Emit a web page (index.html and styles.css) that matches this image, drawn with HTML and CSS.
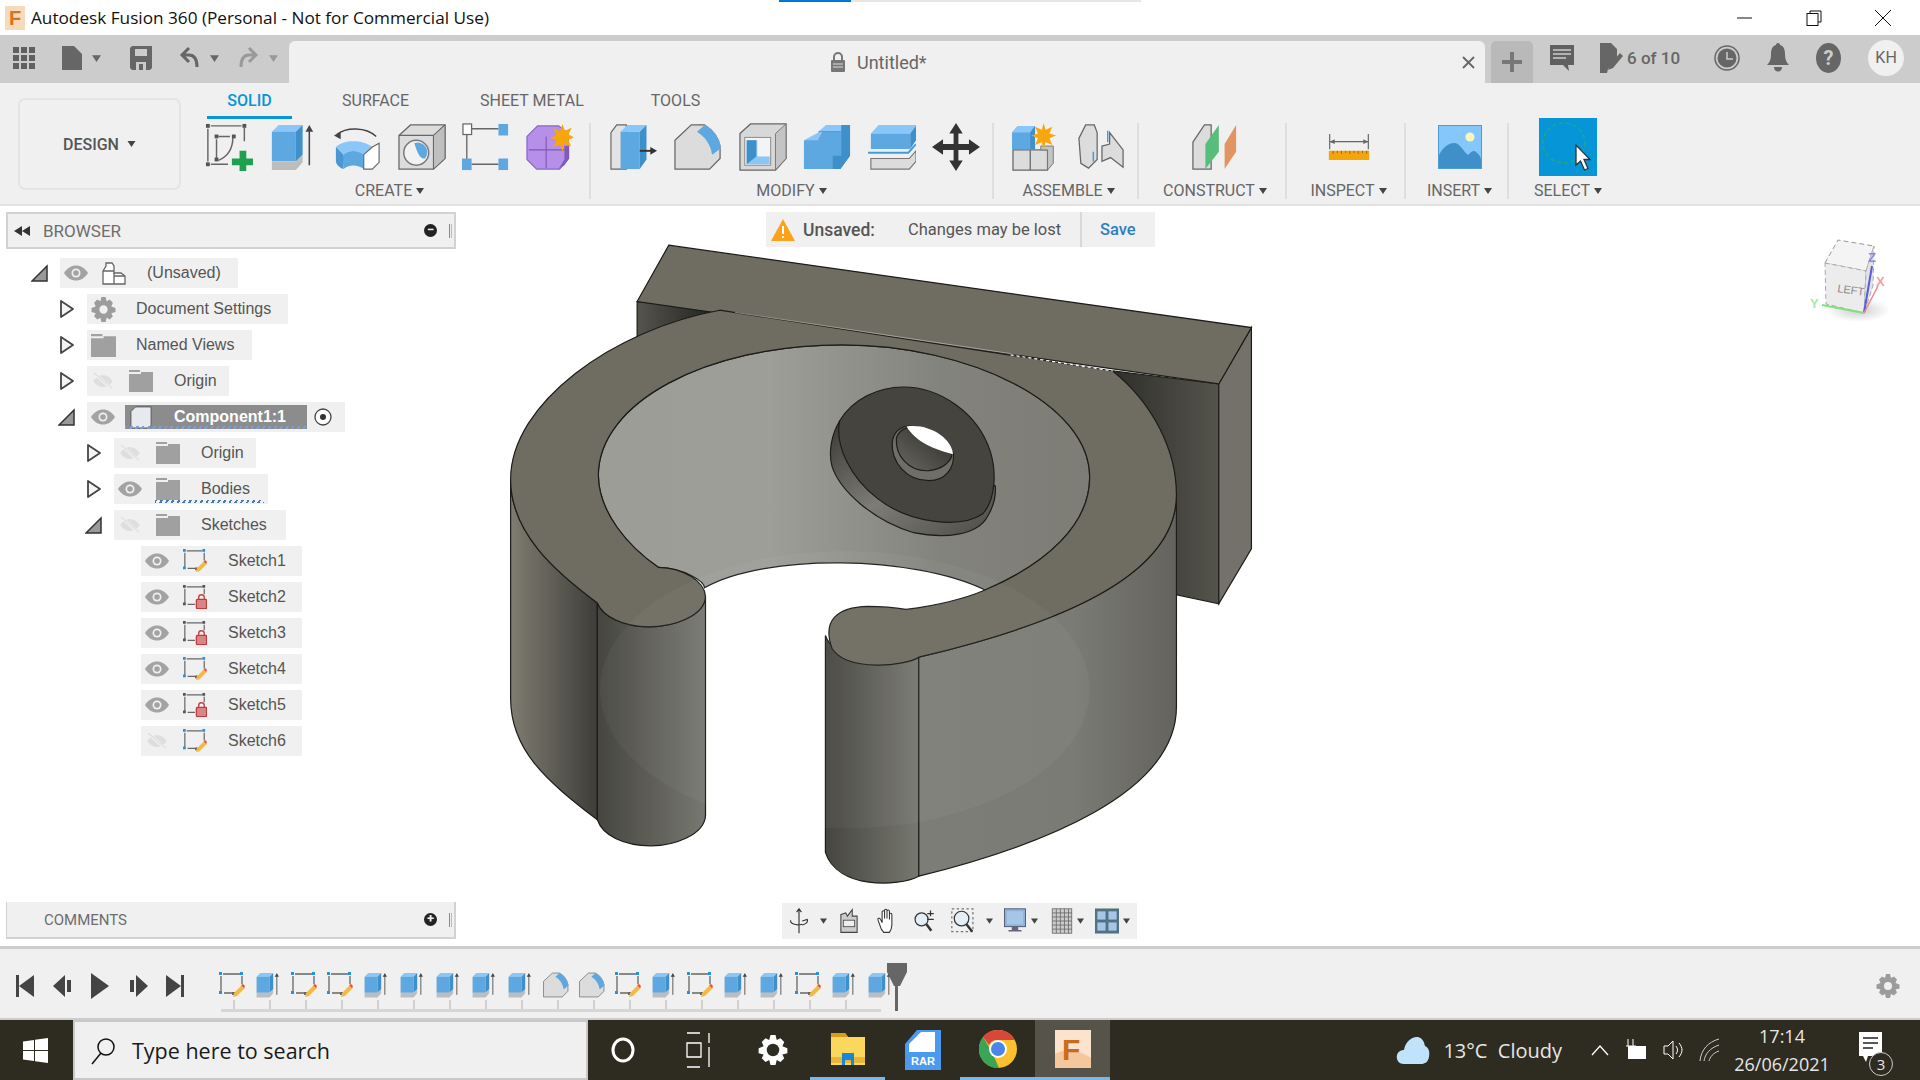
FILE: index.html
```html
<!DOCTYPE html>
<html lang="en">
<head>
    <meta charset="UTF-8">
    <title>Autodesk Fusion 360</title>
    <link rel="stylesheet" href="styles.css">
</head>
<body>
    <svg class="defs" width="0" height="0">
        <defs>
            <linearGradient id="g-floor"><stop offset="0" stop-color="#9c9d97"/><stop offset=".35" stop-color="#9d9e98"/><stop offset=".7" stop-color="#83837d"/><stop offset="1" stop-color="#7d7c75"/></linearGradient>
            <linearGradient id="g-wall-l"><stop offset="0" stop-color="#7f7d71"/><stop offset="1" stop-color="#3e3d39"/></linearGradient>
            <linearGradient id="g-lobe"><stop offset="0" stop-color="#464540"/><stop offset="1" stop-color="#777870"/></linearGradient>
            <linearGradient id="g-wall-r"><stop offset="0" stop-color="#7c7d76"/><stop offset=".6" stop-color="#7a7b74"/><stop offset="1" stop-color="#64635d"/></linearGradient>
            <linearGradient id="g-back-r"><stop offset="0" stop-color="#2f2f2b"/><stop offset="1" stop-color="#55544c"/></linearGradient>
            <linearGradient id="g-back-l"><stop offset="0" stop-color="#55544d"/><stop offset="1" stop-color="#1f1f1c"/></linearGradient>
            <linearGradient id="g-rim" x1="0" y1="0" x2="1" y2="1"><stop offset="0" stop-color="#3a3935"/><stop offset=".5" stop-color="#7d7c75"/><stop offset="1" stop-color="#4c4b45"/></linearGradient>
            <linearGradient id="g-bore" x1="0" y1="1" x2="1" y2="0"><stop offset="0" stop-color="#6a6962"/><stop offset="1" stop-color="#2a2a27"/></linearGradient>
        </defs>
        <symbol id="i-sketch" viewBox="0 0 50 50">
            <g fill="none" stroke="#666" stroke-width="1.500"><path d="M6 3h32M3 6v34M6 43h18M41 5v14"/><path d="M14 14h12M12 17v20M29 15c0 12-6 20-15 24"/></g>
            <g fill="#555"><rect x="1" y="1" width="4" height="4"/><rect x="39" y="1" width="4" height="4"/><rect x="1" y="41" width="4" height="4"/><rect x="10" y="12" width="4" height="4"/><rect x="28" y="12" width="4" height="4"/><rect x="10" y="36" width="4" height="4"/></g>
            <path d="M36 29h7v8h7v7h-7v6h-7v-6h-8v-7h8z" fill="#1ea04e"/>
        </symbol>
        <symbol id="i-extrude" viewBox="0 0 48 50">
            <path d="M2 9 9 2h25l-7 7z" fill="#8ac6f7"/><path d="M2 9h25v31H2z" fill="#5da8e0"/><path d="M27 9l7-7v31l-7 7z" fill="#3f8fcb"/>
            <path d="M2 40h25l7-7v8l-7 8H2z" fill="#bdbdbd"/><path d="M41 44V6" stroke="#444" stroke-width="1.600"/><path d="M37 9l4-7 4 7z" fill="#444"/>
        </symbol>
        <symbol id="i-revolve" viewBox="0 0 50 50">
            <path d="M3 25c8-8 28-8 38 0l-9 8c-6-5-16-5-21 0z" fill="#8ac6f7"/><path d="M3 25l8 8c1 3 0 10 0 15-5-2-8-5-8-9z" fill="#4b97d3"/><path d="M11 33c5-5 15-5 21 0v15c-6-5-16-5-21 0z" fill="#5da8e0"/>
            <path d="M41 25l7-4v20l-7 7-9 0v-15z" fill="#fff" stroke="#666" stroke-width="1.200"/><path d="M4 12c10-8 30-8 41 2" fill="none" stroke="#444" stroke-width="1.500"/><path d="M1 13l7-4 0 8z" fill="#444"/>
        </symbol>
        <symbol id="i-hole" viewBox="0 0 50 50">
            <path d="M1 13 13 2h36v35L37 48H1z" fill="#dcdcdc" stroke="#666" stroke-width="1.300"/><path d="M1 13h36v35M37 13 49 2" fill="none" stroke="#666" stroke-width="1.300"/><path d="M37 13l12-11v35L37 48z" fill="#bfbfbf" stroke="#666" stroke-width="1"/>
            <circle cx="19" cy="31" r="13" fill="#f2f2f2" stroke="#777" stroke-width="1.500"/><path d="M17 21a10 10 0 0 1 11 16c-6 1-9-10-11-16z" fill="#5da8e0"/>
        </symbol>
        <symbol id="i-pattern" viewBox="0 0 50 50">
            <path d="M10 6h28M5 10v28M10 43h28" stroke="#666" stroke-width="1.400"/><rect x="1" y="1" width="9" height="11" fill="#fff" stroke="#666" stroke-width="1.300"/>
            <rect x="38" y="1" width="10" height="12" fill="#5da8e0"/><rect x="0" y="37" width="10" height="12" fill="#5da8e0"/><rect x="38" y="37" width="10" height="12" fill="#5da8e0"/>
        </symbol>
        <symbol id="i-box" viewBox="0 0 50 50">
            <path d="M12 3h22l10 8v26l-9 11H11L1 38V14z" fill="#b58fe8" stroke="#8a64c6" stroke-width="1.200"/><path d="M3 28h37M21 14v33" stroke="#7e58b8" stroke-width="1.200"/><path d="M40 24v14l-6 10 6-4 5-7V24z" fill="#8059bf"/>
            <path d="M38 1l2.500 7 7-3-3 7 5.500 3-6 2.500 3 7-7-2.500L38 30l-2.500-7.500-7 2.500 3-7-6-2.500 6-3-3-7 7 3z" fill="#f7a70d"/>
        </symbol>
        <symbol id="i-press" viewBox="0 0 50 50">
            <path d="M1 10 7 2h10v46H1z" fill="#e3e3e3" stroke="#666" stroke-width="1.200"/><path d="M11 9h20v39H11z" fill="#5da8e0"/><path d="M11 9l7-7h20l-7 7z" fill="#8ac6f7"/><path d="M31 9l7-7v36l-7 10z" fill="#3f8fcb"/>
            <path d="M31 29h12" stroke="#333" stroke-width="2"/><path d="M42 25l7 4-7 4z" fill="#333"/>
        </symbol>
        <symbol id="i-fillet" viewBox="0 0 50 50">
            <path d="M1 18 18 2h14c8 5 14 12 16 22v13L37 48H1z" fill="#dcdcdc" stroke="#666" stroke-width="1.300"/><path d="M39 48V32c0-10-6-18-14-22l7-8c9 5 15 13 17 24l-10 6z" fill="#bdbdbd"/><path d="M24 9l8-7c9 5 15 13 17 24l-9 7c-2-11-8-19-16-24z" fill="#5da8e0"/>
        </symbol>
        <symbol id="i-shell" viewBox="0 0 50 50">
            <path d="M1 11 12 1h37v36L38 49H1z" fill="#d8d8d8" stroke="#666" stroke-width="1.300"/><path d="M38 11 49 1v36L38 49z" fill="#c4c4c4" stroke="#777"/><rect x="6" y="15" width="27" height="29" fill="#f4f4f4" stroke="#888"/>
            <path d="M8 18h11v17h13v8H8z" fill="#8ac6f7"/><path d="M8 18h10v17l-10 8z" fill="#3f8fcb"/>
        </symbol>
        <symbol id="i-combine" viewBox="0 0 50 50">
            <path d="M16 16 24 2h25v32l-10 14H1V18z" fill="#5da8e0"/><path d="M16 9h24V2H24zM1 18h15v-8zM24 2l-8 8v6" fill="#8ac6f7"/><path d="M40 2v32h-9v14h8l10-14V2z" fill="#3f8fcb"/><path d="M16 9h24" stroke="#4a9ad8"/>
        </symbol>
        <symbol id="i-offset" viewBox="0 0 50 50">
            <path d="M3 11 11 2h41l-8 9z" fill="#8ac6f7"/><path d="M3 11h41v16H3z" fill="#5da8e0"/><path d="M44 11l6-8v15l-6 9z" fill="#3f8fcb"/>
            <path d="M3 37h40l7-8v11l-7 8H3z" fill="#dcdcdc" stroke="#777" stroke-width="1.200"/><path d="M0 31h42l8-9" fill="none" stroke="#3f9ce4" stroke-width="2"/>
        </symbol>
        <symbol id="i-move" viewBox="0 0 50 50">
            <path d="M25 0l7 11h-4.500v11H38.500V17L50 25l-11.500 8V28H27.500v11H32L25 50l-7-11h4.500V28H11.500v5L0 25l11.500-8v5H22.500V11H18z" fill="#333"/>
        </symbol>
        <symbol id="i-newcomp" viewBox="0 0 50 50">
            <path d="M0 10l6-7h18v24H0z" fill="#5da8e0"/><path d="M0 10l6-7h18l-5 7z" fill="#8ac6f7"/><path d="M19 10l5-7v24h-5z" fill="#3f8fcb"/><path d="M1 28h18v21H1zM19 28h18v21H19z" fill="#dcdcdc" stroke="#666" stroke-width="1.300"/><path d="M37 49l6-7V24H30v4h7z" fill="#c4c4c4" stroke="#777"/>
            <path d="M33 0l2 7 7-3-3 7 7 2-7 3 3 7-7-3-2 7-2-7-7 3 3-7-7-3 7-2-3-7 7 3z" fill="#f7a70d"/>
        </symbol>
        <symbol id="i-joint" viewBox="0 0 50 50">
            <path d="M2 16 9 2h9l3 8v28l-9 9-8-5z" fill="#dcdcdc" stroke="#666" stroke-width="1.300"/><path d="M26 24l8-2v-12l14 18v18L35 36l-9 4z" fill="#dcdcdc" stroke="#666" stroke-width="1.300"/><path d="M17 30v10M32 8v12" stroke="#3f9ce4" stroke-width="1.500"/>
        </symbol>
        <symbol id="i-plane" viewBox="0 0 50 50">
            <path d="M2 20 14 2h7v46H2z" fill="#dcdcdc" stroke="#666" stroke-width="1.300"/><path d="M15 48V22L29 2v28z" fill="#57bd7b"/><path d="M35 48V22L47 2v28z" fill="#e29560"/>
        </symbol>
        <symbol id="i-measure" viewBox="0 0 50 34" preserveAspectRatio="none">
            <path d="M2 0v20M48 0v20M2 10h46" stroke="#666" stroke-width="1.400"/><path d="M2 10l6-3v6zM48 10l-6-3v6z" fill="#666"/><rect x="1" y="22" width="48" height="12" fill="#f4a50c"/><path d="M6 22v4M11 22v3M16 22v4M21 22v3M26 22v4M31 22v3M36 22v4M41 22v3M46 22v4" stroke="#8a5a10"/>
        </symbol>
        <symbol id="i-image" viewBox="0 0 44 44">
            <rect x=".5" y=".5" width="43" height="43" fill="#85c7fa" stroke="#4f9bd6"/><circle cx="32" cy="12" r="4.500" fill="#fbf6b8"/><path d="M1 43V30c4-8 10-12 15-12 6 0 9 8 14 12 4-4 6-5 8-3 3 2 5 5 5 8v8z" fill="#3f8fc8"/>
        </symbol>
        <symbol id="i-select" viewBox="0 0 58 58">
            <rect width="58" height="58" fill="#0696d7"/><ellipse cx="25" cy="25" rx="21" ry="20" fill="none" stroke="#2aa77a" stroke-width="1.400" stroke-dasharray="4 3"/><path d="M37 27v20l4.500-4 4 9 3.500-1.500-4-9h6z" fill="#fff" stroke="#333" stroke-width="1.300"/>
        </symbol>
        <symbol id="i-eye" viewBox="0 0 24 16">
            <path d="M0 8c6-10 18-10 24 0-6 10-18 10-24 0z" fill="#a3a3a3"/><circle cx="12" cy="8" r="4.500" fill="#f0f0f0"/><circle cx="12" cy="8" r="2.800" fill="#a3a3a3"/>
        </symbol>
        <symbol id="i-eye-off" viewBox="0 0 24 18">
            <path d="M1 9c6-9 16-9 22 0-6 9-16 9-22 0z" fill="#dedede"/><path d="M3 1l18 16" stroke="#f0f0f0" stroke-width="3.500"/><path d="M2 0l20 17" stroke="#dcdcdc" stroke-width="1.200"/>
        </symbol>
        <symbol id="i-folder" viewBox="0 0 24 22">
            <path d="M0 0h11v2H0zM0 4h24v18H0zM12 2h12v2H12z" fill="#a0a0a0"/>
        </symbol>
        <symbol id="i-gear" viewBox="0 0 24 24">
            <path d="M10 0h4l1 4 3-1.500 3 3L19.500 9l4 1.500v4l-4 1 1.500 3-3 3-3-1.500-1 4h-4l-1-4-3 1.500-3-3L4.500 15.500l-4-1v-4l4-1.500L3 5.500l3-3L9 4z" fill="#9c9c9c"/><circle cx="12" cy="12" r="4" fill="#f0f0f0"/>
        </symbol>
        <symbol id="i-sk-edit" viewBox="0 0 26 26">
            <path d="M4 2h17M2 4v16M5 21h8M23 4v8" stroke="#666" stroke-width="1.300"/><g fill="#2193e6"><rect x="0" y="0" width="3" height="3"/><rect x="21" y="0" width="3" height="3"/><rect x="0" y="19" width="3" height="3"/></g><rect x="13" y="20" width="3" height="3" fill="#666"/>
            <path d="M15 21l8-8 3 3-8 8-4 1z" fill="#f4b942"/><path d="M22 13l2-1 2 2-1 2z" fill="#e84a4a"/>
        </symbol>
        <symbol id="i-sk-lock" viewBox="0 0 26 26">
            <path d="M4 2h17M2 4v16M5 21h8M23 4v6" stroke="#666" stroke-width="1.300"/><g fill="#555"><rect x="0" y="0" width="3" height="3"/><rect x="21" y="0" width="3" height="3"/><rect x="0" y="19" width="3" height="3"/></g>
            <path d="M17 16v-2.500a3 3 0 0 1 6 0V16" fill="none" stroke="#c94040" stroke-width="1.500"/><rect x="14.500" y="15.500" width="11" height="10" rx="1" fill="#d78585" stroke="#c23a3a" stroke-width="1.400"/>
        </symbol>
        <symbol id="i-caret" viewBox="0 0 8 6"><path d="M0 0h8L4 6z"/></symbol>
        <symbol id="i-tri-open" viewBox="0 0 18 18"><path d="M16 2v15H1z" fill="#999" stroke="#333" stroke-width="1.500"/></symbol>
        <symbol id="i-tri-closed" viewBox="0 0 16 20"><path d="M2 2l12 8-12 8z" fill="#f4f4f4" stroke="#444" stroke-width="1.800" stroke-linejoin="round"/></symbol>
    </svg>

    <header class="titlebar">
        <svg class="app-icon" width="20" height="24" viewBox="0 0 20 24"><rect width="20" height="24" fill="#f7d9bb"/><text x="4" y="19" class="app-f">F</text></svg>
        <span class="window-title">Autodesk Fusion 360 (Personal - Not for Commercial Use)</span>
        <div class="progress"><span class="progress-fill"></span></div>
        <div class="window-buttons">
            <svg width="16" height="16" viewBox="0 0 16 16"><path d="M0 8h15" stroke="#111"/></svg>
            <svg width="16" height="16" viewBox="0 0 16 16" fill="none" stroke="#111"><path d="M4 3V1h11v11h-3"/><rect x="1" y="3.500" width="11" height="12" fill="#fff"/></svg>
            <svg width="16" height="16" viewBox="0 0 16 16"><path d="M0 0l16 16M16 0 0 16" stroke="#111"/></svg>
        </div>
    </header>

    <div class="tabbar">
        <div class="quick">
            <svg class="q-grid" width="22" height="22" viewBox="0 0 22 22" fill="#606060"><rect width="6" height="6"/><rect x="8" width="6" height="6"/><rect x="16" width="6" height="6"/><rect y="8" width="6" height="6"/><rect x="8" y="8" width="6" height="6"/><rect x="16" y="8" width="6" height="6"/><rect y="16" width="6" height="6"/><rect x="8" y="16" width="6" height="6"/><rect x="16" y="16" width="6" height="6"/></svg>
            <svg class="q-file" width="20" height="24" viewBox="0 0 20 24"><path d="M0 0h12l8 8v16H0z" fill="#666"/></svg>
            <svg class="q-caret" width="9" height="7"><use href="#i-caret" fill="#666"/></svg>
            <svg class="q-save" width="22" height="24" viewBox="0 0 22 24"><path d="M2 0h20v22l-2 2H2l-2-2V2z" fill="#666"/><rect x="5" y="3" width="12" height="7" fill="#ccc"/><rect x="6" y="16" width="10" height="8" fill="#ccc"/><rect x="9" y="18" width="4" height="6" fill="#666"/></svg>
            <svg class="q-undo" width="20" height="24" viewBox="0 0 20 24" fill="none" stroke="#666" stroke-width="3"><path d="M10 2 3 9l7 7M3 9h7c5 0 8 4 8 12"/></svg>
            <svg class="q-caret2" width="9" height="7"><use href="#i-caret" fill="#666"/></svg>
            <svg class="q-redo" width="20" height="24" viewBox="0 0 20 24" fill="none" stroke="#999" stroke-width="3"><path d="M10 2l7 7-7 7M17 9h-7C5 9 2 13 2 21"/></svg>
            <svg class="q-caret3" width="9" height="7"><use href="#i-caret" fill="#999"/></svg>
        </div>
        <div class="doc-tab">
            <svg class="doc-lock" width="14" height="20" viewBox="0 0 14 20"><path d="M3 9V5a4 4 0 0 1 8 0v4" fill="none" stroke="#777" stroke-width="2"/><rect y="8" width="14" height="12" rx="1" fill="#777"/><path d="M2 12h10M2 15h10" stroke="#ddd"/></svg>
            <span class="doc-name">Untitled*</span>
            <svg class="doc-close" width="13" height="13" viewBox="0 0 13 13"><path d="M1 1l11 11M12 1 1 12" stroke="#666" stroke-width="1.800"/></svg>
        </div>
        <div class="plus-tab"><svg width="20" height="20" viewBox="0 0 20 20"><path d="M8 0h4v8h8v4h-8v8H8v-8H0V8h8z" fill="#777"/></svg></div>
        <div class="account">
            <svg class="a-comment" width="24" height="28" viewBox="0 0 24 28"><path d="M0 1h24v20h-6l1 6-6-6H0z" fill="#606060"/><path d="M3 6h18M3 10h18M3 14h13" stroke="#ccc" stroke-width="1.500"/></svg>
            <svg class="a-doc" width="24" height="30" viewBox="0 0 24 30"><path d="M0 0h11l6 6v9L8 26l-1 4H0z" fill="#666"/><path d="M20 10l3 3-10 12-5 2 2-5z" fill="#666"/></svg>
            <span class="doc-count">6 of 10</span>
            <svg class="a-clock" width="26" height="26" viewBox="0 0 26 26"><circle cx="13" cy="13" r="12" fill="#ccc" stroke="#666" stroke-width="1.500"/><circle cx="13" cy="13" r="9.500" fill="#666"/><path d="M13 7v7h6" fill="none" stroke="#ccc" stroke-width="1.500"/></svg>
            <svg class="a-bell" width="22" height="30" viewBox="0 0 22 30"><path d="M11 0c1.500 0 2 1 2 2 4 1 5 5 5 9 0 5 1 8 4 11H0c3-3 4-6 4-11 0-4 1-8 5-9 0-1 .5-2 2-2zM7 24h8c0 6-8 6-8 0z" fill="#666"/></svg>
            <div class="a-help">?</div>
            <div class="avatar">KH</div>
        </div>
    </div>

    <section class="ribbon">
        <div class="design-box"><span>DESIGN</span><svg width="9" height="6"><use href="#i-caret" fill="#444"/></svg></div>
        <div class="ribbon-main">
            <nav class="ribbon-tabs">
                <span class="rtab rtab-active">SOLID</span>
                <span class="rtab rtab-surface">SURFACE</span>
                <span class="rtab rtab-sheet">SHEET METAL</span>
                <span class="rtab rtab-tools">TOOLS</span>
            </nav>
            <div class="groups">
                <div class="group g-create">
                    <div class="tools">
                        <svg class="tool"><use href="#i-sketch"/></svg>
                        <svg class="tool"><use href="#i-extrude"/></svg>
                        <svg class="tool"><use href="#i-revolve"/></svg>
                        <svg class="tool"><use href="#i-hole"/></svg>
                        <svg class="tool"><use href="#i-pattern"/></svg>
                        <svg class="tool"><use href="#i-box"/></svg>
                    </div>
                    <div class="group-label">CREATE <svg width="8" height="6"><use href="#i-caret" fill="#444"/></svg></div>
                </div>
                <div class="group g-modify">
                    <div class="tools">
                        <svg class="tool"><use href="#i-press"/></svg>
                        <svg class="tool"><use href="#i-fillet"/></svg>
                        <svg class="tool"><use href="#i-shell"/></svg>
                        <svg class="tool"><use href="#i-combine"/></svg>
                        <svg class="tool"><use href="#i-offset"/></svg>
                        <svg class="tool"><use href="#i-move"/></svg>
                    </div>
                    <div class="group-label">MODIFY <svg width="8" height="6"><use href="#i-caret" fill="#444"/></svg></div>
                </div>
                <div class="group g-assemble">
                    <div class="tools">
                        <svg class="tool"><use href="#i-newcomp"/></svg>
                        <svg class="tool"><use href="#i-joint"/></svg>
                    </div>
                    <div class="group-label">ASSEMBLE <svg width="8" height="6"><use href="#i-caret" fill="#444"/></svg></div>
                </div>
                <div class="group g-construct">
                    <div class="tools"><svg class="tool"><use href="#i-plane"/></svg></div>
                    <div class="group-label">CONSTRUCT <svg width="8" height="6"><use href="#i-caret" fill="#444"/></svg></div>
                </div>
                <div class="group g-inspect">
                    <div class="tools"><svg class="tool tool-wide"><use href="#i-measure"/></svg></div>
                    <div class="group-label">INSPECT <svg width="8" height="6"><use href="#i-caret" fill="#444"/></svg></div>
                </div>
                <div class="group g-insert">
                    <div class="tools"><svg class="tool tool-image"><use href="#i-image"/></svg></div>
                    <div class="group-label">INSERT <svg width="8" height="6"><use href="#i-caret" fill="#444"/></svg></div>
                </div>
                <div class="group g-select">
                    <div class="tools"><svg class="tool tool-select"><use href="#i-select"/></svg></div>
                    <div class="group-label">SELECT <svg width="8" height="6"><use href="#i-caret" fill="#444"/></svg></div>
                </div>
            </div>
        </div>
    </section>

    <main class="workspace">
        <!-- the part sits on a free canvas, coordinates are in a 1568 unit box -->
        <svg class="model" viewBox="0 0 1568 1568" preserveAspectRatio="none">
            <g stroke="#1c1c1a" stroke-width="1.200">
                <path vector-effect="non-scaling-stroke" d="M308 165 308 250 470 185z" fill="url(#g-back-l)"/>
                <path vector-effect="non-scaling-stroke" d="M1240 325 1448 355 1448 862 1300 825z" fill="url(#g-back-r)"/>
                <path vector-effect="non-scaling-stroke" d="M1448 355 1512 225 1512 735 1448 862z" fill="#73716a"/>
                <path vector-effect="non-scaling-stroke" d="M370 35 1512 225 1448 355 308 165z" fill="#6f6d61"/>
                <path vector-effect="non-scaling-stroke" d="M232 565C232 400 440 265 710 265 960 265 1195 400 1195 570 1195 680 1110 770 990 830 850 750 560 745 440 825 440 810 400 780 350 778 290 730 232 650 232 565z" fill="url(#g-floor)"/>
                <path vector-effect="non-scaling-stroke" d="M60 575C60 700 150 790 230 860L230 1360C130 1270 60 1200 60 1080z" fill="url(#g-wall-l)"/>
                <path vector-effect="non-scaling-stroke" d="M230 860C240 890 280 915 330 915 380 915 440 890 442 845L442 1350C440 1395 380 1420 335 1420 280 1420 240 1395 230 1360z" fill="url(#g-lobe)"/>
                <path vector-effect="non-scaling-stroke" d="M677 935C690 985 790 1020 860 985L860 1490C820 1515 700 1520 677 1435z" fill="url(#g-lobe)"/>
                <path vector-effect="non-scaling-stroke" d="M860 985C1130 910 1365 800 1365 610L1365 1100C1365 1300 1100 1420 860 1490z" fill="url(#g-wall-r)"/>
                <path vector-effect="non-scaling-stroke" d="M230 860C150 790 60 700 60 575 60 400 260 230 470 185L1240 325C1320 400 1365 510 1365 610 1365 800 1130 910 860 985 835 1005 720 1020 690 965 670 900 700 870 760 868 790 868 820 872 835 875 900 865 950 850 990 830 1110 770 1195 680 1195 570 1195 400 960 265 710 265 440 265 232 400 232 565 232 650 290 730 350 778 400 780 440 810 442 845 440 890 380 915 330 915 280 915 240 890 230 860z" fill="#6f6d61"/>
                <path vector-effect="non-scaling-stroke" d="M705 440C690 470 682 510 690 545 705 600 770 670 850 698 910 712 975 705 995 660 1005 640 1012 620 1010 590z" fill="url(#g-rim)"/>
                <path vector-effect="non-scaling-stroke" d="M705 440C730 390 780 362 830 362 900 362 975 420 1000 510 1012 555 1012 620 985 655 940 690 840 675 780 620 725 570 695 495 705 440z" fill="#45443f"/>
                <path vector-effect="non-scaling-stroke" d="M808 490C806 535 835 578 880 578 912 578 930 550 928 515 900 480 860 450 838 452 820 456 810 470 808 490z" fill="#6f6e67"/>
                <path vector-effect="non-scaling-stroke" d="M816 480C814 520 840 558 880 555 905 552 925 535 925 515 890 490 860 470 838 455 826 460 818 470 816 480z" fill="url(#g-bore)"/>
                <path d="M836 453C880 445 925 480 927 517 890 505 855 490 836 453z" fill="#fff" stroke="none"/>
            </g>
            <ellipse cx="715" cy="1060" rx="480" ry="320" fill="#fff" opacity=".04"/>
            <path vector-effect="non-scaling-stroke" d="M500 190 1040 285" stroke="#c9c9c2" stroke-width=".6" fill="none"/>
            <path vector-effect="non-scaling-stroke" d="M1040 288 1240 325" stroke="#fff" stroke-width="1.200" stroke-dasharray="3 3" fill="none"/>
        </svg>

        <aside class="sidebar">
            <div class="panel-head">
                <svg class="rewind" width="16" height="10" viewBox="0 0 16 10"><path d="M8 0v10L0 5zM16 0v10L8 5z" fill="#333"/></svg>
                <span class="panel-title">BROWSER</span>
                <span class="panel-btn">−</span>
                <span class="grip"></span>
            </div>
            <div class="tree">
                <div class="row"><svg class="arrow"><use href="#i-tri-open"/></svg><div class="row-body rb-root"><svg class="eye"><use href="#i-eye"/></svg><svg class="node-ico" width="24" height="24" viewBox="0 0 24 24" fill="#fff" stroke="#666" stroke-width="1.300"><path d="M1 10 4 5V2h6l2 3v7h7l4 3v8H1z"/><path d="M1 10h11M12 12v11M12 15h11"/></svg><span class="label">(Unsaved)</span></div></div>
                <div class="row lv1"><svg class="arrow"><use href="#i-tri-closed"/></svg><div class="row-body rb-settings"><svg class="leading"><use href="#i-gear"/></svg><span class="label">Document Settings</span></div></div>
                <div class="row lv1"><svg class="arrow"><use href="#i-tri-closed"/></svg><div class="row-body rb-views"><svg class="leading"><use href="#i-folder"/></svg><span class="label">Named Views</span></div></div>
                <div class="row lv1"><svg class="arrow"><use href="#i-tri-closed"/></svg><div class="row-body rb-origin"><svg class="eye"><use href="#i-eye-off"/></svg><svg class="folder"><use href="#i-folder"/></svg><span class="label">Origin</span></div></div>
                <div class="row lv1"><svg class="arrow"><use href="#i-tri-open"/></svg>
                    <div class="row-body rb-comp"><svg class="eye"><use href="#i-eye"/></svg>
                        <div class="selected"><svg class="comp-ico" width="24" height="24" viewBox="0 0 24 24"><path d="M1 6 6 1h17v20l-3 3H3a2 2 0 0 1-2-2z" fill="#e6e9ee" stroke="#555"/></svg><span class="label-sel">Component1:1</span><span class="squiggle squiggle-comp"></span></div>
                        <svg class="radio" width="18" height="18" viewBox="0 0 18 18"><circle cx="9" cy="9" r="8" fill="#fff" stroke="#444" stroke-width="1.300"/><circle cx="9" cy="9" r="3" fill="#333"/></svg>
                    </div>
                </div>
                <div class="row lv2"><svg class="arrow"><use href="#i-tri-closed"/></svg><div class="row-body rb-origin"><svg class="eye"><use href="#i-eye-off"/></svg><svg class="folder"><use href="#i-folder"/></svg><span class="label">Origin</span></div></div>
                <div class="row lv2"><svg class="arrow"><use href="#i-tri-closed"/></svg><div class="row-body rb-bodies"><svg class="eye"><use href="#i-eye"/></svg><svg class="folder"><use href="#i-folder"/></svg><span class="label">Bodies</span><span class="squiggle"></span></div></div>
                <div class="row lv2"><svg class="arrow"><use href="#i-tri-open"/></svg><div class="row-body rb-sketches"><svg class="eye"><use href="#i-eye-off"/></svg><svg class="folder"><use href="#i-folder"/></svg><span class="label">Sketches</span></div></div>
                <div class="row lv3"><div class="row-body rb-sketch"><svg class="eye"><use href="#i-eye"/></svg><svg class="folder"><use href="#i-sk-edit"/></svg><span class="label">Sketch1</span></div></div>
                <div class="row lv3"><div class="row-body rb-sketch"><svg class="eye"><use href="#i-eye"/></svg><svg class="folder"><use href="#i-sk-lock"/></svg><span class="label">Sketch2</span></div></div>
                <div class="row lv3"><div class="row-body rb-sketch"><svg class="eye"><use href="#i-eye"/></svg><svg class="folder"><use href="#i-sk-lock"/></svg><span class="label">Sketch3</span></div></div>
                <div class="row lv3"><div class="row-body rb-sketch"><svg class="eye"><use href="#i-eye"/></svg><svg class="folder"><use href="#i-sk-edit"/></svg><span class="label">Sketch4</span></div></div>
                <div class="row lv3"><div class="row-body rb-sketch"><svg class="eye"><use href="#i-eye"/></svg><svg class="folder"><use href="#i-sk-lock"/></svg><span class="label">Sketch5</span></div></div>
                <div class="row lv3"><div class="row-body rb-sketch"><svg class="eye"><use href="#i-eye-off"/></svg><svg class="folder"><use href="#i-sk-edit"/></svg><span class="label">Sketch6</span></div></div>
            </div>
            <div class="panel-head panel-comments">
                <span class="panel-title">COMMENTS</span>
                <span class="panel-btn">+</span>
                <span class="grip"></span>
            </div>
        </aside>

        <div class="unsaved">
            <svg width="24" height="22" viewBox="0 0 24 22"><path d="M12 0l12 22H0z" fill="#faa21b"/><path d="M11 7h2v8h-2zM11 17h2v2h-2z" fill="#fff"/></svg>
            <b class="unsaved-label">Unsaved:</b>
            <span class="unsaved-msg">Changes may be lost</span>
            <a class="unsaved-save">Save</a>
        </div>

        <svg class="viewcube" width="84" height="88" viewBox="0 0 84 88">
            <defs><radialGradient id="g-shadow"><stop offset="0" stop-color="#999" stop-opacity=".5"/><stop offset="1" stop-color="#999" stop-opacity="0"/></radialGradient></defs>
            <ellipse cx="50" cy="74" rx="32" ry="12" fill="url(#g-shadow)"/>
            <path d="M17 27 30 4l36 6-8 25z" fill="#f4f4f4" stroke="#999" stroke-dasharray="5 3"/>
            <path d="M17 27l41 8-2 42-38-9z" fill="#ececec" stroke="#aaa" stroke-dasharray="5 3"/>
            <path d="M58 35l8-25-1 40-9 27z" fill="#e2e2e2" stroke="#aaa" stroke-dasharray="5 3"/>
            <text x="29" y="56" class="cube-left" transform="rotate(8 29 56)">LEFT</text>
            <path d="M56 77 64 30" stroke="#5a5ae0" stroke-width="2"/><path d="M56 77 70 50" stroke="#e88" stroke-width="1.500"/><path d="M56 77 14 69" stroke="#7fe07f" stroke-width="2"/>
            <text x="60" y="26" class="cube-axis cube-z">Z</text><text x="68" y="50" class="cube-axis cube-x">X</text><text x="2" y="72" class="cube-axis cube-y">Y</text>
        </svg>

        <div class="navbar">
            <svg class="nv nv-orbit" viewBox="0 0 24 32" fill="none" stroke="#333" stroke-width="1.400"><path d="M12 1v30M9 5l3-4 3 4M2 15c-2 4 6 7 14 5M16 16l6-2c2 4-3 6-6 7"/></svg>
            <svg class="nv-caret" width="7" height="6"><use href="#i-caret" fill="#444"/></svg>
            <svg class="nv nv-look" viewBox="0 0 24 32"><path d="M2 8 8 6l2 4 6-8v8h6v20H2z" fill="#ccc" stroke="#444" stroke-width="1.300"/><rect x="5" y="15" width="14" height="8" fill="#eee" stroke="#444"/></svg>
            <svg class="nv nv-hand" viewBox="0 0 24 32" fill="#fff" stroke="#333" stroke-width="1.300"><path d="M5 26 1 15c-1-3 2-3 3-1l2 4V5c0-2 3-2 3 0v8-10c0-2 3-2 3 0v10-9c0-2 3-2 3 0v10-6c0-2 3-2 3 0v13c0 4-1 6-3 9H8z"/></svg>
            <svg class="nv nv-zoom" viewBox="0 0 28 32" fill="none" stroke="#333" stroke-width="1.500"><circle cx="11" cy="14" r="8" fill="#e4eef7"/><path d="M17 20l6 8" stroke-width="3"/><path d="M22 3v7M18 7h8M18 14h8"/></svg>
            <svg class="nv nv-fit" viewBox="0 0 32 32" fill="none" stroke="#333" stroke-width="1.500"><rect x="1" y="1" width="26" height="28" stroke-dasharray="3 3" stroke="#777"/><circle cx="13" cy="13" r="9" fill="#e4eef7"/><path d="M19 20l7 9" stroke-width="3"/></svg>
            <svg class="nv-caret" width="7" height="6"><use href="#i-caret" fill="#444"/></svg>
            <svg class="nv nv-display" viewBox="0 0 28 32"><rect x="1" y="1" width="26" height="22" fill="#8eb4dc" stroke="#445"/><rect x="4" y="4" width="20" height="16" fill="#a6c6e8"/><path d="M10 23h8v4h-8zM6 27h16v2H6z" fill="#667"/></svg>
            <svg class="nv-caret nv-caret-tight" width="7" height="6"><use href="#i-caret" fill="#444"/></svg>
            <svg class="nv nv-grid" viewBox="0 0 26 32" stroke="#666" stroke-width="1"><rect x="1" y="1" width="24" height="30" fill="#ccc"/><path d="M6 1v30M11 1v30M16 1v30M21 1v30M1 6h24M1 11h24M1 16h24M1 21h24M1 26h24"/></svg>
            <svg class="nv-caret nv-caret-tight" width="7" height="6"><use href="#i-caret" fill="#444"/></svg>
            <svg class="nv nv-views" viewBox="0 0 26 26" stroke="#466"><rect width="26" height="26" fill="#5b7ba5"/><rect x="2" y="2" width="10" height="10" fill="#a6c6e8"/><rect x="14" y="2" width="10" height="10" fill="#a6c6e8"/><rect x="2" y="14" width="10" height="10" fill="#a6c6e8"/><rect x="14" y="14" width="10" height="10" fill="#a6c6e8"/></svg>
            <svg class="nv-caret nv-caret-tight" width="7" height="6"><use href="#i-caret" fill="#444"/></svg>
        </div>
    </main>

    <section class="timeline">
        <div class="transport">
            <svg width="18" height="22" viewBox="0 0 18 22"><path d="M0 0h3v22H0zM18 0v22L3 11z" fill="#444"/></svg>
            <svg width="20" height="22" viewBox="0 0 20 22"><path d="M12 0v22L0 11zM14 5h4v12h-4z" fill="#444"/></svg>
            <svg width="18" height="26" viewBox="0 0 18 26"><path d="M0 0l18 13L0 26z" fill="#444"/></svg>
            <svg width="20" height="22" viewBox="0 0 20 22"><path d="M8 0v22l12-11zM2 5h4v12H2z" fill="#444"/></svg>
            <svg width="18" height="22" viewBox="0 0 18 22"><path d="M0 0v22l15-11zM15 0h3v22h-3z" fill="#444"/></svg>
        </div>
        <div class="track">
            <div class="features">
                <svg class="feat"><use href="#i-sk-edit"/></svg><svg class="feat"><use href="#i-extrude"/></svg><svg class="feat"><use href="#i-sk-edit"/></svg><svg class="feat"><use href="#i-sk-edit"/></svg><svg class="feat"><use href="#i-extrude"/></svg><svg class="feat"><use href="#i-extrude"/></svg><svg class="feat"><use href="#i-extrude"/></svg><svg class="feat"><use href="#i-extrude"/></svg><svg class="feat"><use href="#i-extrude"/></svg><svg class="feat"><use href="#i-fillet"/></svg><svg class="feat"><use href="#i-fillet"/></svg><svg class="feat"><use href="#i-sk-edit"/></svg><svg class="feat"><use href="#i-extrude"/></svg><svg class="feat"><use href="#i-sk-edit"/></svg><svg class="feat"><use href="#i-extrude"/></svg><svg class="feat"><use href="#i-extrude"/></svg><svg class="feat"><use href="#i-sk-edit"/></svg><svg class="feat"><use href="#i-extrude"/></svg><svg class="feat"><use href="#i-extrude"/></svg>
            </div>
            <div class="ruler"></div>
            <svg class="marker" width="20" height="48" viewBox="0 0 20 48"><path d="M0 0h20v9l-7 14H7L0 9z" fill="#666"/><rect x="8" y="10" width="3" height="38" fill="#666"/></svg>
        </div>
        <svg class="tl-gear" width="24" height="24"><use href="#i-gear"/></svg>
    </section>

    <footer class="taskbar">
        <svg class="start" width="25" height="25" viewBox="0 0 25 25" fill="#fff"><path d="M0 3.500 11 2v10H0zM12 1.800 25 0v12H12zM0 13h11v10L0 21.500zM12 13h13v12l-13-1.800z"/></svg>
        <div class="search">
            <svg width="24" height="28" viewBox="0 0 24 28" fill="none" stroke="#111" stroke-width="1.500"><circle cx="15" cy="10" r="8"/><path d="M10 16 1 27"/></svg>
            <span>Type here to search</span>
        </div>
        <div class="tb-apps">
            <div class="tb-app"><svg width="24" height="26" viewBox="0 0 24 26"><ellipse cx="12" cy="13" rx="10" ry="11" fill="none" stroke="#fff" stroke-width="3"/></svg></div>
            <div class="tb-app"><svg width="24" height="36" viewBox="0 0 24 36" fill="none" stroke="#fff" stroke-width="1.300"><path d="M1 1h13M1 35h13M1 11h14v14H1zM23 1v10M23 15v20"/></svg></div>
            <div class="tb-app"><svg width="30" height="32" viewBox="0 0 24 24"><path d="M10 0h4l1 4 3-1.500 3 3L19.500 9l4 1.500v4l-4 1 1.500 3-3 3-3-1.500-1 4h-4l-1-4-3 1.500-3-3L4.500 15.500l-4-1v-4l4-1.500L3 5.500l3-3L9 4z" fill="#fff"/><circle cx="12" cy="12" r="5" fill="#2e2b20"/></svg></div>
            <div class="tb-app tb-on"><svg width="34" height="32" viewBox="0 0 34 32"><path d="M0 0h14l3 4h17v28H0z" fill="#fbd75b"/><path d="M0 0h14l3 4H0z" fill="#d89b1c"/><path d="M0 24h34v6H0z" fill="#e8b63a"/><path d="M11 20h12v12h-3v-5h-6v5h-3z" fill="#1b86d6"/></svg></div>
            <div class="tb-app"><svg width="36" height="40" viewBox="0 0 36 40"><path d="M12 0h24v40H0V14z" fill="#4a9bef"/><path d="M16 2h14v20H4V14z" fill="#fff"/><text x="18" y="35" class="rar">RAR</text></svg></div>
            <div class="tb-app tb-on"><svg width="38" height="38" viewBox="0 0 38 38"><circle cx="19" cy="19" r="19" fill="#fbc02d"/><path d="M19 0A19 19 0 0 1 36 10H19a9 9 0 0 0-9 5L4 7A19 19 0 0 1 19 0z" fill="#d9463a"/><path d="M4 7l9 15 7 16A19 19 0 0 1 4 7z" fill="#3aa655"/><circle cx="19" cy="19" r="9" fill="#fff"/><circle cx="19" cy="19" r="7" fill="#4a86e8"/></svg></div>
            <div class="tb-app tb-fusion tb-on"><svg width="36" height="38" viewBox="0 0 36 38"><rect width="36" height="38" fill="#fbe3cd"/><path d="M0 24c10-6 24-4 36 4v10H0z" fill="#f5c79c"/><text x="7" y="30" class="app-f2">F</text></svg></div>
        </div>
        <div class="tray">
            <svg class="cloud" width="34" height="28" viewBox="0 0 34 28"><path d="M8 28C2 28 0 23 1 19s5-5 7-5c1-8 8-14 14-13 6 2 6 6 7 9 4 2 5 6 4 11s-4 7-8 7z" fill="#bfe3fb"/></svg>
            <span class="weather">13°C&nbsp; Cloudy</span>
            <svg class="tray-ico caret-up" width="18" height="11" viewBox="0 0 18 11"><path d="M1 10 9 1l8 9" fill="none" stroke="#fff" stroke-width="1.300"/></svg>
            <svg class="tray-ico batt" width="24" height="22" viewBox="0 0 24 22"><rect x="4" y="7" width="18" height="13" fill="#fff"/><path d="M4 0v7M9 0v7M2 7h10" stroke="#fff"/></svg>
            <svg class="tray-ico spk" width="22" height="22" viewBox="0 0 22 22" fill="none" stroke="#fff"><path d="M1 7h4l5-5v18l-5-5H1zM13 7c2 3 2 5 0 8M16 4c4 5 4 9 0 14"/></svg>
            <svg class="tray-ico wifi" width="22" height="24" viewBox="0 0 22 24" fill="none" stroke="#ccc"><path d="M2 23C3 12 10 4 21 1M6 23c1-7 6-13 15-16M11 23c1-4 4-8 10-10"/></svg>
            <div class="clock"><span>17:14</span><span>26/06/2021</span></div>
            <div class="notify">
                <svg width="24" height="36" viewBox="0 0 24 36"><path d="M0 0h23v24H9l-2 6-3-6H0z" fill="#fff"/><path d="M4 6h15M4 11h15M4 16h10" stroke="#222" stroke-width="1.500"/></svg>
                <span class="badge">3</span>
            </div>
        </div>
    </footer>
</body>
</html>
```
FILE: styles.css
```css
* {
    box-sizing: border-box;
}
html, body {
    margin: 0;
    height: 1080px;
    overflow: hidden;
}
body {
    display: flex;
    flex-direction: column;
    width: 1920px;
    background: #fff;
    font-family: "Roboto", "Liberation Sans", sans-serif;
    color: #555;
}
svg {
    display: block;
    flex: none;
}
.defs {
    position: absolute;
}

/* title bar */
.titlebar {
    height: 35px;
    display: flex;
    align-items: center;
    padding-left: 5px;
    background: #fff;
    position: relative;
}
.app-f {
    font: bold 20px "Liberation Sans", sans-serif;
    fill: #d5751f;
}
.window-title {
    margin-left: 6px;
    font-family: "Open Sans", sans-serif;
    font-size: 17.200px;
    color: #111;
}
.progress {
    position: absolute;
    left: 779px;
    top: 0;
    width: 362px;
    height: 2px;
    background: #e6e6e6;
}
.progress-fill {
    display: block;
    width: 72px;
    height: 2px;
    background: #0078d7;
}
.window-buttons {
    margin-left: auto;
    display: flex;
    gap: 53px;
    padding-right: 29px;
}

/* tab bar */
.tabbar {
    height: 48px;
    display: flex;
    background: #ccc;
    padding-top: 6px;
}
.quick {
    width: 289px;
    display: flex;
    align-items: center;
    padding: 0 0 8px 13px;
}
.q-file { margin-left: 27px; }
.q-caret { margin-left: 10px; }
.q-save { margin-left: 29px; }
.q-undo { margin-left: 27px; }
.q-caret2 { margin-left: 11px; }
.q-redo { margin-left: 20px; }
.q-caret3 { margin-left: 10px; }
.doc-tab {
    width: 1196px;
    background: #f0f0f0;
    border-radius: 6px 6px 0 0;
    display: flex;
    align-items: center;
    padding-left: 542px;
}
.doc-name {
    margin-left: 12px;
    font-size: 18px;
    color: #666;
}
.doc-close {
    margin-left: auto;
    margin-right: 10px;
}
.plus-tab {
    width: 42px;
    margin-left: 6px;
    background: #b9b9b9;
    border-radius: 5px 5px 0 0;
    display: flex;
    align-items: center;
    justify-content: center;
}
.account {
    flex: 1;
    display: flex;
    align-items: center;
    padding-bottom: 8px;
}
.a-comment { margin-left: 17px; }
.a-doc { margin-left: 26px; }
.doc-count {
    margin-left: 3px;
    font-size: 17px;
    font-weight: 500;
    color: #666;
}
.a-clock { margin-left: 34px; }
.a-bell { margin-left: 27px; }
.a-help {
    margin-left: 27px;
    width: 25px;
    height: 30px;
    border-radius: 50%;
    background: #666;
    color: #ccc;
    font-weight: 700;
    font-size: 20px;
    text-align: center;
    line-height: 30px;
}
.avatar {
    margin-left: 27px;
    width: 36px;
    height: 36px;
    border-radius: 50%;
    background: #f0f0f0;
    color: #666;
    font-size: 16px;
    text-align: center;
    line-height: 36px;
}

/* ribbon */
.ribbon {
    height: 123px;
    display: flex;
    background: #f0f0f0;
    border-bottom: 2px solid #e2e2e2;
    padding-left: 18px;
}
.design-box {
    width: 163px;
    height: 92px;
    margin-top: 15px;
    border: 2px solid #e4e4e4;
    border-radius: 7px;
    display: flex;
    align-items: center;
    justify-content: center;
    gap: 8px;
    font-size: 16px;
    font-weight: 500;
    color: #555;
}
.ribbon-main {
    margin-left: 16px;
    flex: 1;
}
.ribbon-tabs {
    height: 37px;
    position: relative;
    display: flex;
    font-size: 16px;
    color: #666;
}
.rtab {
    padding-top: 8px;
}
.rtab-active {
    width: 85px;
    margin-left: 10px;
    text-align: center;
    color: #0696d7;
    font-weight: 500;
    border-bottom: 3px solid #0696d7;
    height: 36px;
}
.rtab-surface { margin-left: 50px; }
.rtab-sheet { margin-left: 71px; }
.rtab-tools { margin-left: 67px; }
.groups {
    display: flex;
    padding-top: 3px;
}
.group {
    border-right: 2px solid #dedede;
    height: 76px;
    margin-right: 6px;
    display: flex;
    flex-direction: column;
    align-items: center;
    justify-content: space-between;
}
.g-create { width: 394px; padding-right: 7px; }
.g-modify { width: 395px; padding-right: 8px; margin-left: 2px; }
.g-modify .tools { margin-left: 7px; }
.g-assemble { width: 139px; }
.g-construct { width: 142px; }
.g-inspect { width: 113px; }
.g-insert { width: 97px; }
.g-select { width: 106px; border-right: 0; }
.tools {
    display: flex;
    height: 48px;
    align-items: center;
}
.tool {
    width: 48px;
    height: 48px;
    margin: 0 8.200px;
}
.tool-wide {
    width: 42px;
    height: 26px;
}
.tool-image {
    width: 44px;
    height: 44px;
}
.tool-select {
    width: 58px;
    height: 58px;
    margin-top: -1px;
}
.group-label {
    font-size: 16px;
    color: #666;
    line-height: 18px;
    display: flex;
    align-items: center;
    gap: 4px;
    margin-bottom: -1px;
}

/* workspace */
.workspace {
    height: 740px;
    position: relative;
    display: flex;
    background: #fff;
}
.model {
    position: absolute;
    left: 480px;
    top: 24px;
    width: 800px;
    height: 680px;
}
.sidebar {
    width: 450px;
    margin-left: 6px;
    padding-top: 6px;
    padding-bottom: 7px;
    display: flex;
    flex-direction: column;
    position: relative;
}
.panel-head {
    height: 37px;
    flex: none;
    background: #f0f0f0;
    border: 2px solid #d2d2d2;
    display: flex;
    align-items: center;
    padding-left: 6px;
    font-size: 17px;
}
.panel-title {
    margin-left: 13px;
    color: #6d6d6d;
}
.panel-comments {
    margin-top: auto;
    border-top: 0;
    border-left-width: 1px;
    padding-left: 24px;
    font-size: 15px;
}
.panel-btn {
    margin-left: auto;
    width: 13px;
    height: 13px;
    border-radius: 50%;
    background: #222;
    color: #f0f0f0;
    font-size: 13px;
    font-weight: 700;
    line-height: 12px;
    text-align: center;
}
.grip {
    margin: 0 2px 0 12px;
    width: 3px;
    height: 14px;
    border-left: 1px solid #888;
    border-right: 1px solid #bbb;
}
.tree {
    margin-top: 9px;
    display: flex;
    flex-direction: column;
    gap: 6px;
    font-family: "Liberation Sans", sans-serif;
    font-size: 16px;
    color: #555;
}
.row {
    height: 30px;
    display: flex;
    align-items: center;
    padding-left: 25px;
}
.lv1 { padding-left: 52px; }
.lv2 { padding-left: 79px; }
.lv3 { padding-left: 135px; }
.arrow {
    width: 18px;
    height: 20px;
    margin-right: 11px;
}
.row-body {
    height: 30px;
    display: flex;
    align-items: center;
    background: #f0f0f0;
    padding-left: 4px;
    position: relative;
}
.rb-root { width: 178px; }
.rb-settings { width: 201px; }
.rb-views { width: 165px; }
.rb-origin { width: 142px; }
.rb-comp { width: 258px; }
.rb-bodies { width: 154px; }
.rb-sketches { width: 172px; }
.rb-sketch { width: 161px; }
.eye {
    width: 24px;
    height: 16px;
}
.node-ico {
    margin-left: 14px;
}
.leading {
    width: 25px;
    height: 25px;
}
.folder {
    width: 24px;
    height: 24px;
    margin-left: 14px;
}
.label {
    margin-left: 21px;
    white-space: nowrap;
}
.leading + .label {
    margin-left: 20px;
}
.selected {
    margin-left: 10px;
    width: 182px;
    height: 24px;
    background: #8c8c8c;
    display: flex;
    align-items: center;
    padding-left: 5px;
    color: #fff;
    font-weight: 700;
    position: relative;
}
.comp-ico {
    width: 22px;
    height: 24px;
}
.label-sel {
    margin-left: 22px;
    white-space: nowrap;
}
.radio {
    margin-left: 7px;
}
.squiggle {
    position: absolute;
    left: 41px;
    right: 4px;
    bottom: 1px;
    height: 3px;
    background: repeating-linear-gradient(120deg, #4a78b4 0 2px, transparent 2px 5px);
}
.squiggle-comp {
    left: 0;
    right: 0;
    bottom: 0;
    background: repeating-linear-gradient(120deg, #7f9fd0 0 2px, transparent 2px 5px);
}
.unsaved {
    position: absolute;
    left: 766px;
    top: 6px;
    width: 389px;
    height: 35px;
    display: flex;
    align-items: center;
    background: #f0f0f0;
    padding-left: 5px;
    font-size: 16.500px;
    color: #555;
}
.unsaved-label {
    margin-left: 8px;
    font-size: 17.500px;
    font-weight: 500;
}
.unsaved-msg {
    margin-left: 33px;
    width: 172px;
    white-space: nowrap;
}
.unsaved-save {
    border-left: 2px solid #d8d8d8;
    height: 35px;
    line-height: 35px;
    padding-left: 18px;
    color: #2b80c4;
    font-weight: 500;
}
.viewcube {
    position: absolute;
    left: 1808px;
    top: 30px;
}
.cube-left {
    font: 11px "Liberation Sans", sans-serif;
    fill: #888;
}
.cube-axis {
    font: bold 13px "Liberation Sans", sans-serif;
}
.cube-z { fill: #8a8ae8; }
.cube-x { fill: #eea0a0; }
.cube-y { fill: #a8e8a8; }
.navbar {
    position: absolute;
    left: 782px;
    top: 697px;
    width: 355px;
    height: 36px;
    background: #f0f0f0;
    display: flex;
    align-items: center;
    padding-left: 5px;
}
.nv {
    height: 26px;
    width: 24px;
}
.nv-caret {
    margin-left: 8.500px;
}
.nv-caret-tight {
    margin-left: 3.500px;
}
.nv-look { margin-left: 10.500px; }
.nv-hand { margin-left: 14px; }
.nv-zoom { margin-left: 13px; }
.nv-fit { margin-left: 15px; width: 26px; }
.nv-display { margin-left: 10.500px; }
.nv-grid { margin-left: 12px; }
.nv-views { margin-left: 11px; }

/* timeline */
.timeline {
    height: 74px;
    background: #f0f0f0;
    border-top: 3px solid #cdcdcd;
    border-bottom: 2px solid #ccc;
    display: flex;
    align-items: flex-start;
    position: relative;
}
.transport {
    display: flex;
    align-items: center;
    gap: 18.500px;
    padding: 24px 0 0 16px;
    width: 218px;
}
.track {
    width: 680px;
    position: relative;
    margin-left: 1px;
}
.features {
    display: flex;
    gap: 10px;
    padding-top: 23px;
}
.feat {
    width: 26px;
    height: 26px;
}
.ruler {
    margin-top: 2px;
    margin-left: 2px;
    width: 660px;
    height: 12px;
    border-bottom: 3px solid #d6d6d6;
    background: repeating-linear-gradient(90deg, transparent 0 12px, #d0d0d0 12px 14px, transparent 14px 36px);
}
.marker {
    position: absolute;
    left: 668px;
    top: 14px;
}
.tl-gear {
    margin: 25px 20px 0 auto;
}

/* windows taskbar */
.taskbar {
    height: 60px;
    flex: none;
    display: flex;
    align-items: center;
    background: #2e2b20;
    color: #fff;
}
.start {
    margin-left: 23px;
}
.search {
    margin-left: 25px;
    width: 515px;
    height: 60px;
    background: #f0f0f0;
    border: 2px solid #c8c8c8;
    display: flex;
    align-items: center;
    gap: 17px;
    padding-left: 16px;
    padding-top: 1px;
    font-family: "Open Sans", sans-serif;
    font-size: 21.500px;
    color: #1a1a1a;
}
.tb-apps {
    display: flex;
    height: 60px;
    margin-left: -3px;
}
.tb-app {
    width: 75px;
    height: 60px;
    display: flex;
    align-items: center;
    justify-content: center;
}
.tb-on {
    border-bottom: 3px solid #76b9ed;
}
.tb-fusion {
    background: #55534a;
}
.rar {
    font: bold 11px "Liberation Sans", sans-serif;
    fill: #fff;
    text-anchor: middle;
}
.app-f2 {
    font: bold 30px "Liberation Sans", sans-serif;
    fill: #c96c1b;
}
.tray {
    margin-left: auto;
    display: flex;
    align-items: center;
    padding-right: 37px;
    font-family: "Open Sans", sans-serif;
    color: #e6e6e6;
}
.weather {
    margin-left: 13px;
    font-size: 20px;
}
.caret-up { margin-left: 29px; }
.batt { margin-left: 15px; }
.spk { margin-left: 15px; }
.wifi { margin-left: 13px; }
.clock {
    margin-left: 7px;
    width: 110px;
    display: flex;
    flex-direction: column;
    align-items: center;
    gap: 4px;
    font-size: 18px;
}
.notify {
    margin-left: 22px;
    position: relative;
}
.badge {
    position: absolute;
    left: 10px;
    top: 20px;
    width: 24px;
    height: 24px;
    border-radius: 50%;
    border: 1px solid #ccc;
    background: #2e2b20;
    font-size: 15px;
    line-height: 22px;
    text-align: center;
}
```
